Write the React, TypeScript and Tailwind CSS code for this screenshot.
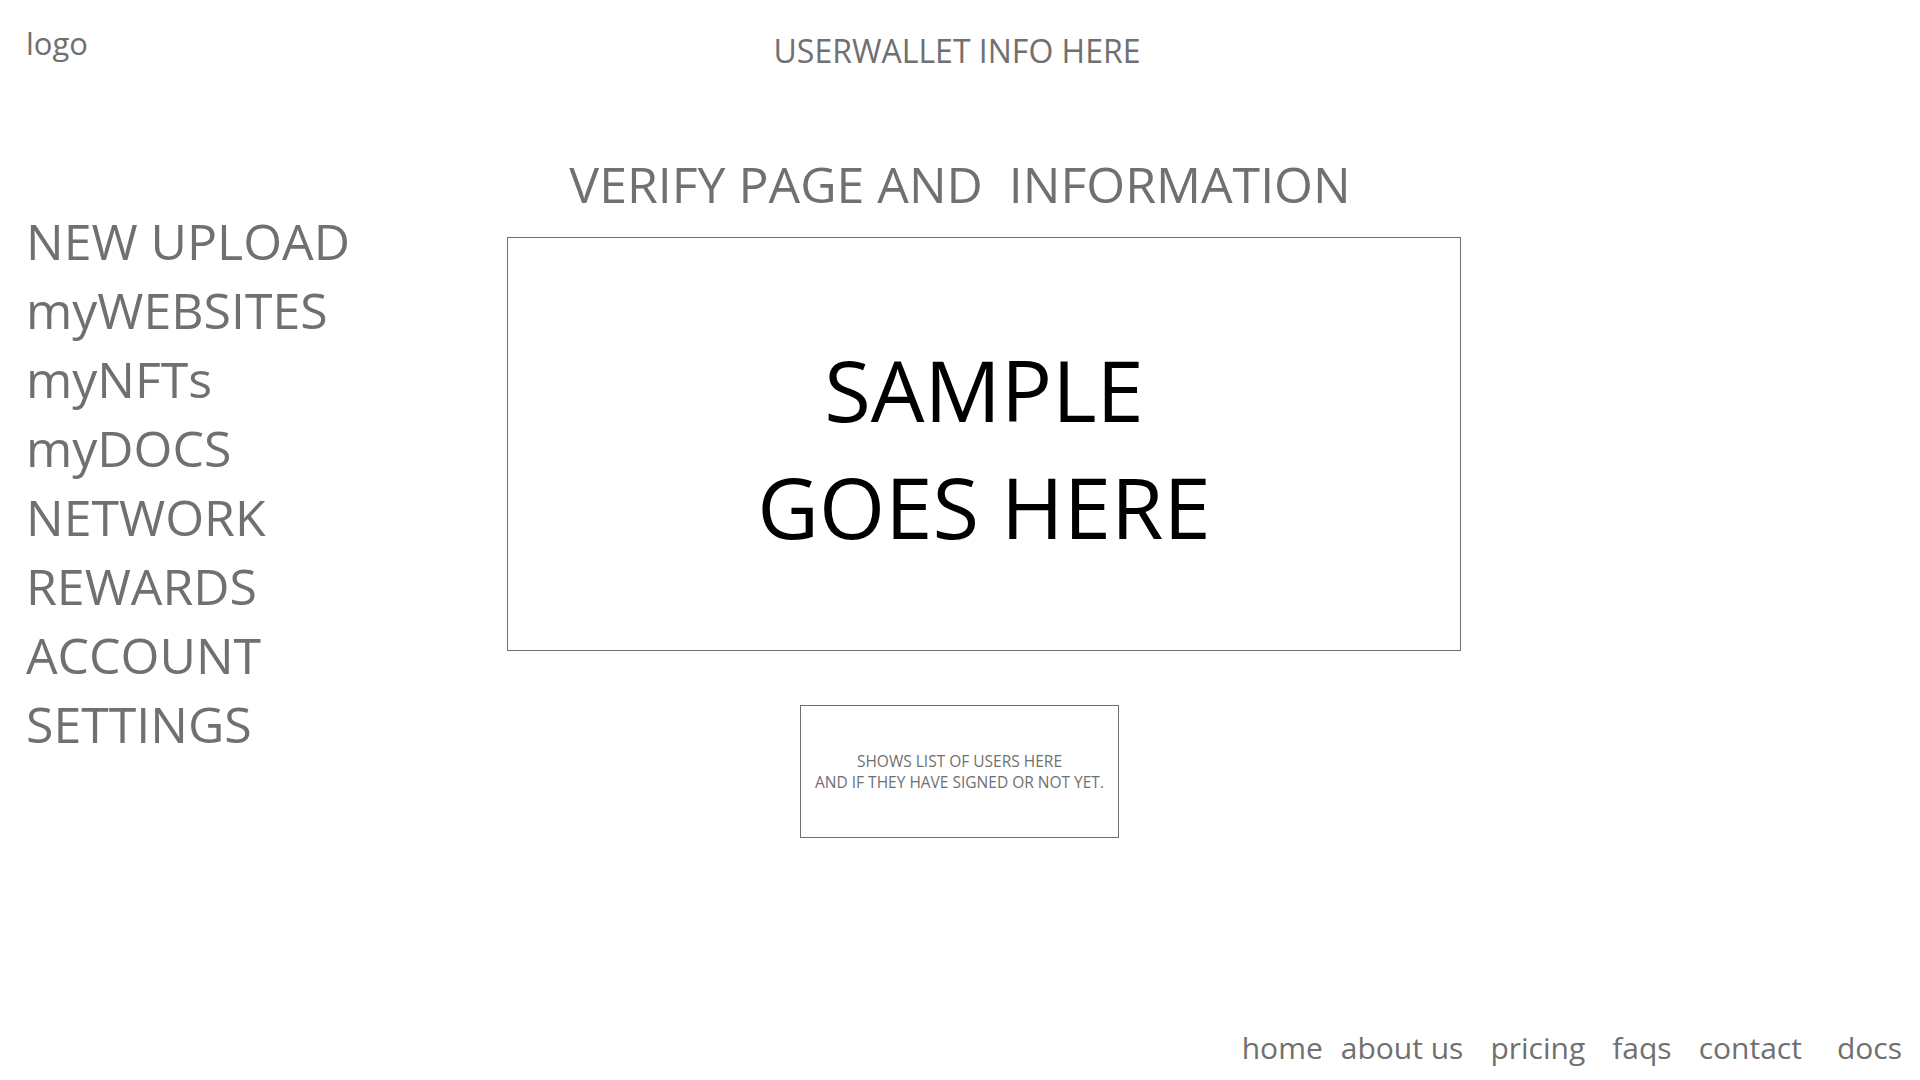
const navItems = [
  "NEW UPLOAD",
  "myWEBSITES",
  "myNFTs",
  "myDOCS",
  "NETWORK",
  "REWARDS",
  "ACCOUNT",
  "SETTINGS",
];

const footerLinks = [
  { label: "home", cls: "" },
  { label: "about us", cls: "ml-[18px]" },
  { label: "pricing", cls: "ml-[27px]" },
  { label: "faqs", cls: "ml-[27px]" },
  { label: "contact", cls: "ml-[27px]" },
  { label: "docs", cls: "ml-[35px]" },
];

const App = () => {
  return (
    <div className="w-[1920px] h-[1080px] flex flex-col bg-white text-[#707070] font-['Open_Sans',sans-serif] overflow-hidden">
      {/* top bar */}
      <header className="h-[162px] grid grid-cols-[1fr_auto_1fr] items-start">
        <div className="pl-[26px] pt-[28px] text-[31px] leading-none">logo</div>
        <div className="mr-[6px] pt-[35px] text-[32px] leading-none">USERWALLET INFO HERE</div>
        <div />
      </header>

      <div className="flex-1 flex items-start">
        {/* sidebar */}
        <nav className="w-[507px] shrink-0 pl-[26px] pt-[45px] flex flex-col">
          {navItems.map((item) => (
            <a key={item} href="#" className="text-[50px] leading-[69px]">
              {item}
            </a>
          ))}
        </nav>

        {/* verify content */}
        <main className="w-[954px] flex flex-col">
          <h1 className="-mt-[3px] pr-[48px] text-center text-[50px] leading-none whitespace-pre">
            VERIFY PAGE AND  INFORMATION
          </h1>

          <div className="mt-[28px] h-[414px] border border-[#6e6e6e] flex flex-col items-center justify-center pt-[7px] text-black text-[85px] leading-[117px]">
            <span>SAMPLE</span>
            <span>GOES HERE</span>
          </div>

          <div className="mt-[54px] ml-[293px] w-[319px] h-[133px] border border-[#6e6e6e] flex flex-col items-center justify-center text-[15.5px] leading-[21px]">
            <span>SHOWS LIST OF USERS HERE</span>
            <span>AND IF THEY HAVE SIGNED OR NOT YET.</span>
          </div>
        </main>
      </div>

      <footer className="flex justify-end pr-[18px] pb-[17px] text-[30px] leading-none">
        {footerLinks.map((link) => (
          <a key={link.label} href="#" className={link.cls}>
            {link.label}
          </a>
        ))}
      </footer>
    </div>
  );
};

export default App;
